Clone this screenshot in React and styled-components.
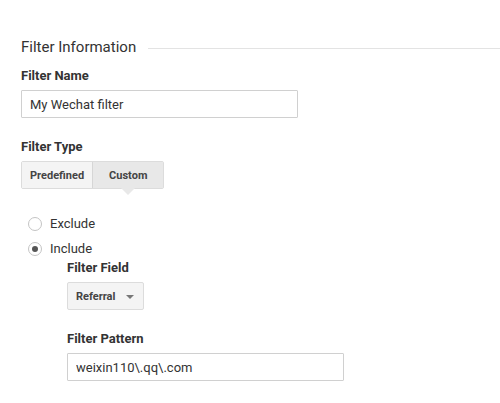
import React, { useState } from "react";
import styled, { createGlobalStyle } from "styled-components";

const GlobalStyle = createGlobalStyle`
  body {
    margin: 0;
    background: #fff;
    font-family: Roboto, "Liberation Sans", Arial, sans-serif;
    color: #333;
  }
`;

function App() {
  const [type, setType] = useState("custom");
  const [mode, setMode] = useState("include");

  return (
    <Page>
      <GlobalStyle />
      <SectionHeader>
        <h2>Filter Information</h2>
        <Rule />
      </SectionHeader>

      <Label>Filter Name</Label>
      <TextInput defaultValue="My Wechat filter" />

      <Label $top={21}>Filter Type</Label>
      <ButtonGroup>
        <Toggle $active={type === "predefined"} onClick={() => setType("predefined")}>
          Predefined
        </Toggle>
        <Toggle $active={type === "custom"} onClick={() => setType("custom")}>
          Custom
        </Toggle>
      </ButtonGroup>

      <RadioList>
        <RadioRow onClick={() => setMode("exclude")}>
          <Radio $checked={mode === "exclude"} />
          Exclude
        </RadioRow>
        <RadioRow onClick={() => setMode("include")}>
          <Radio $checked={mode === "include"} />
          Include
        </RadioRow>
      </RadioList>

      <Nested>
        <Label $top={3}>Filter Field</Label>
        <Dropdown>
          Referral
          <Caret />
        </Dropdown>

        <Label $top={21}>Filter Pattern</Label>
        <TextInput $width={277} defaultValue="weixin110\.qq\.com" />
      </Nested>
    </Page>
  );
}

export default App;

const Page = styled.div`
  padding: 38px 0 0 21px;
`;

const SectionHeader = styled.div`
  display: flex;
  align-items: center;
  gap: 12px;
  h2 {
    margin: 0;
    font-size: 15px;
    font-weight: 400;
    line-height: 18px;
    color: #333;
    white-space: nowrap;
  }
`;

const Rule = styled.div`
  flex: 1;
  height: 1px;
  margin-top: 3px;
  background: #e3e3e3;
`;

const Label = styled.div`
  margin-top: ${(p) => (p.$top != null ? p.$top : 12)}px;
  margin-bottom: 6px;
  font-size: 13px;
  font-weight: 700;
  line-height: 16px;
  color: #333;
`;

const TextInput = styled.input`
  display: block;
  box-sizing: border-box;
  width: ${(p) => p.$width || 277}px;
  height: 28px;
  padding: 0 8px;
  border: 1px solid #d0d0d0;
  border-radius: 1px;
  font-family: Roboto, "Liberation Sans", Arial, sans-serif;
  font-size: 13px;
  color: #333;
  outline: none;
`;

const ButtonGroup = styled.div`
  display: flex;
  width: fit-content;
  border: 1px solid #dcdcdc;
  border-radius: 2px;
`;

const Toggle = styled.button`
  position: relative;
  height: 26px;
  padding: 0 ${(p) => (p.$active ? 16 : 8)}px;
  border: none;
  border-left: ${(p) => (p.$active ? "1px solid #d6d6d6" : "none")};
  background: ${(p) => (p.$active ? "#e8e8e8" : "#f4f4f4")};
  font-family: Roboto, "Liberation Sans", Arial, sans-serif;
  font-size: 11px;
  font-weight: 700;
  color: #444;
  cursor: pointer;
  &::after {
    content: "";
    display: ${(p) => (p.$active ? "block" : "none")};
    position: absolute;
    left: 50%;
    bottom: -7px;
    transform: translateX(-50%);
    border-left: 7px solid transparent;
    border-right: 7px solid transparent;
    border-top: 7px solid #e8e8e8;
  }
`;

const RadioList = styled.div`
  display: flex;
  flex-direction: column;
  gap: 9px;
  margin-top: 27px;
  padding-left: 7px;
`;

const RadioRow = styled.label`
  display: flex;
  align-items: center;
  gap: 8px;
  font-size: 13px;
  line-height: 16px;
  color: #333;
  cursor: pointer;
`;

const Radio = styled.span`
  position: relative;
  box-sizing: border-box;
  width: 14px;
  height: 14px;
  border: 1px solid #c4c4c4;
  border-radius: 50%;
  background: #fff;
  &::after {
    content: "";
    display: ${(p) => (p.$checked ? "block" : "none")};
    position: absolute;
    left: 3px;
    top: 3px;
    width: 6px;
    height: 6px;
    border-radius: 50%;
    background: #555;
  }
`;

const Nested = styled.div`
  padding-left: 46px;
`;

const Dropdown = styled.div`
  display: flex;
  align-items: center;
  justify-content: space-between;
  box-sizing: border-box;
  width: 77px;
  height: 28px;
  padding: 0 9px 0 8px;
  border: 1px solid #dcdcdc;
  border-radius: 2px;
  background: #f4f4f4;
  font-size: 11px;
  font-weight: 700;
  color: #444;
`;

const Caret = styled.span`
  width: 0;
  height: 0;
  margin-top: 2px;
  border-left: 4px solid transparent;
  border-right: 4px solid transparent;
  border-top: 4px solid #777;
`;
